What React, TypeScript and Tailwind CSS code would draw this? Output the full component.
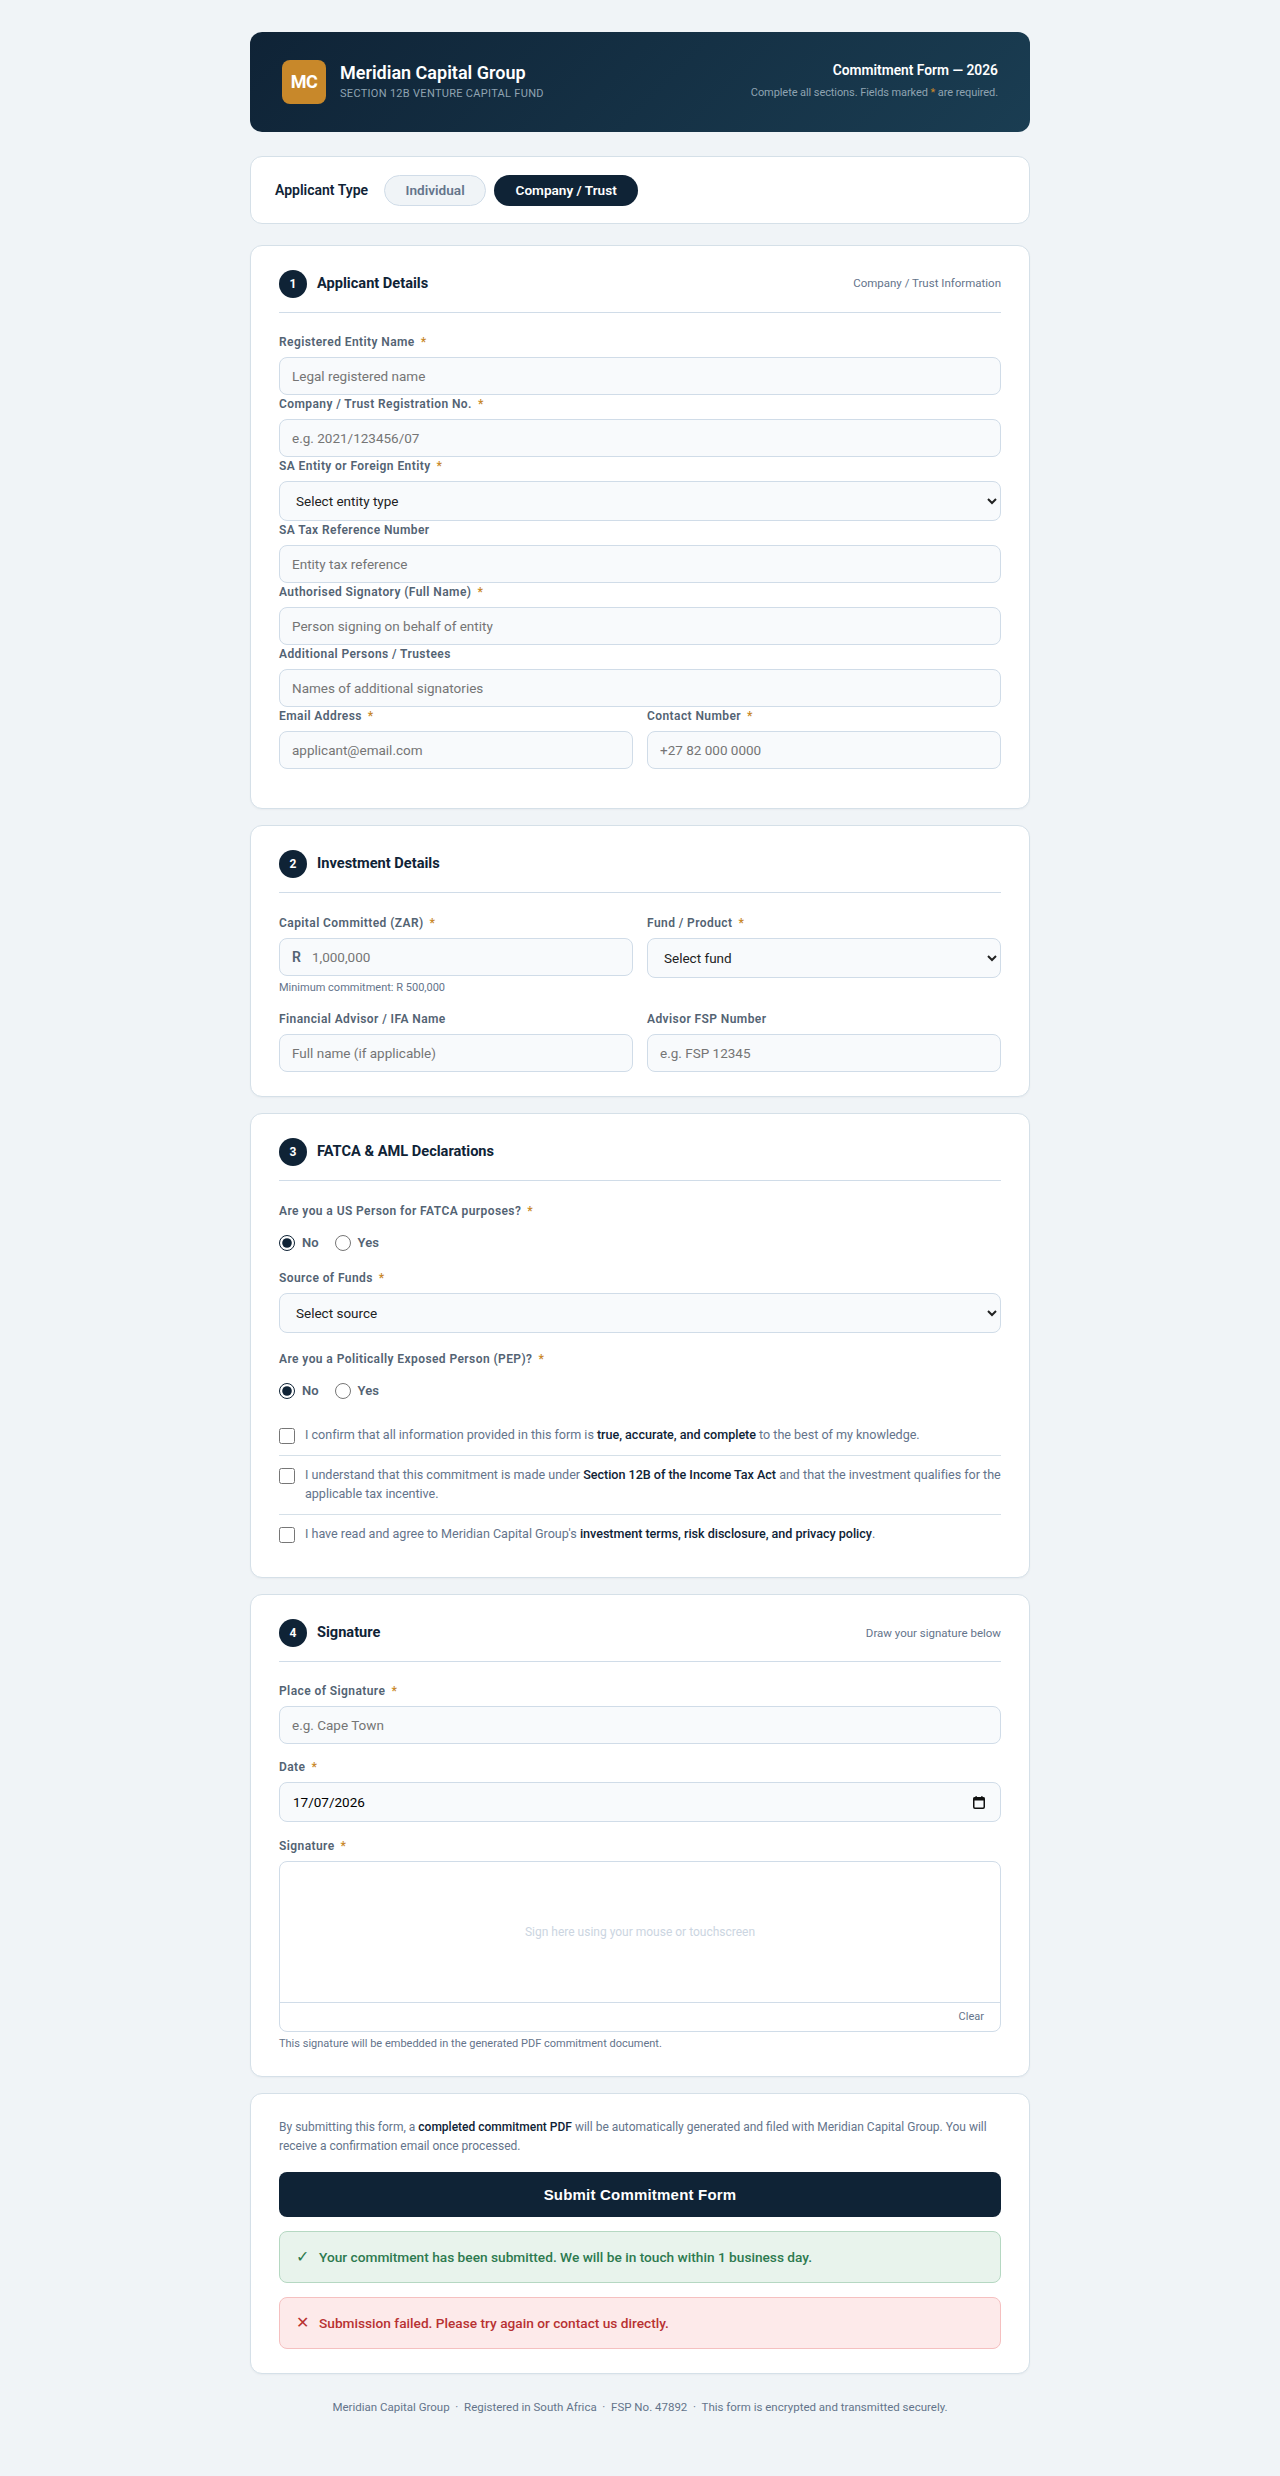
import React from "react";

const inputCls =
  "block w-full h-[38px] px-3 rounded-lg border border-[#d0dce8] bg-[#f8fafc] text-[13.5px] text-[#111827] placeholder:text-[#757575] outline-none";
const selectCls =
  "block w-full h-10 px-3 rounded-lg border border-[#d0dce8] bg-[#f8fafc] text-[13.5px] text-[#222] outline-none";

function Label({ text, req }: { text: string; req?: boolean }) {
  return (
    <label className="block h-[18px] mb-1.5 text-xs leading-[18px] font-semibold tracking-[0.42px] text-[#536373]">
      {text}
      {req && <span className="ml-1.5 text-[#c8882a]">*</span>}
    </label>
  );
}

function Field({ label, req, placeholder, className }: { label: string; req?: boolean; placeholder: string; className?: string }) {
  return (
    <div className={className}>
      <Label text={label} req={req} />
      <input className={inputCls} placeholder={placeholder} />
    </div>
  );
}

function SelectField({ label, req, option, className }: { label: string; req?: boolean; option: string; className?: string }) {
  return (
    <div className={className}>
      <Label text={label} req={req} />
      <select className={selectCls} defaultValue="">
        <option value="">{option}</option>
      </select>
    </div>
  );
}

function Heading({ n, title, note }: { n: number; title: string; note?: string }) {
  return (
    <div className="flex items-center justify-between pb-3.5 mb-5 border-b border-[#d0dce8]">
      <div className="flex items-center gap-2.5">
        <div className="w-7 h-7 rounded-full bg-[#0f2336] text-white flex items-center justify-center text-xs font-bold">{n}</div>
        <h2 className="text-[14.6px] font-bold text-[#0f2336]">{title}</h2>
      </div>
      {note && <span className="text-[11.5px] text-[#64748b]">{note}</span>}
    </div>
  );
}

function Card({ children, className }: { children: React.ReactNode; className?: string }) {
  return <section className={`bg-white border border-[#d5e0e8] rounded-xl px-7 py-6 shadow-[0_1px_2px_rgba(15,35,54,0.04)] ${className ?? ""}`}>{children}</section>;
}

function RadioRow({ name }: { name: string }) {
  return (
    <div className="flex items-center gap-4 h-6 mt-[11px] text-[13px] font-semibold text-[#536373]">
      <label className="flex items-center gap-[7px]">
        <input type="radio" name={name} defaultChecked className="w-4 h-4 accent-[#0f2336]" />
        No
      </label>
      <label className="flex items-center gap-[7px]">
        <input type="radio" name={name} className="w-4 h-4 accent-[#0f2336]" />
        Yes
      </label>
    </div>
  );
}

function Check({ children, last }: { children: React.ReactNode; last?: boolean }) {
  return (
    <label className={`flex items-start gap-2.5 py-2.5 text-[12.6px] leading-[18.85px] tracking-[-0.03px] text-[#64748b] ${last ? "" : "border-b border-[#d5e0e8]"}`}>
      <input type="checkbox" className="w-4 h-4 mt-0.5 shrink-0" />
      <span>{children}</span>
    </label>
  );
}

const B = ({ children }: { children: React.ReactNode }) => <strong className="font-medium text-[#0f2336]">{children}</strong>;

export default function App() {
  return (
    <div className="min-h-screen bg-[#f0f4f7] font-['Roboto',sans-serif] pt-8 pb-[60px]">
      <div className="w-[780px] mx-auto">
        <header className="h-[100px] rounded-xl px-8 flex items-center justify-between bg-[linear-gradient(135deg,#0f2336,#1a3d52)]">
          <div className="flex items-center gap-3.5">
            <div className="w-11 h-11 rounded-lg bg-[#c8882a] flex items-center justify-center text-white text-lg font-bold tracking-[-0.5px]">MC</div>
            <div>
              <div className="text-lg leading-[22px] font-semibold text-white">Meridian Capital Group</div>
              <div className="text-[11px] leading-4 mt-0.5 tracking-[0.3px] text-[#8fa3b1]">SECTION 12B VENTURE CAPITAL FUND</div>
            </div>
          </div>
          <div className="text-right pb-[2px]">
            <div className="text-[13.8px] leading-[18px] font-semibold text-white">Commitment Form — 2026</div>
            <div className="text-[11px] leading-4 mt-1.5 tracking-[-0.08px] text-[#8fa3b1]">
              Complete all sections. Fields marked <span className="text-[#c8882a]">*</span> are required.
            </div>
          </div>
        </header>

        <section className="mt-6 mb-[21px] h-[68px] bg-white border border-[#d5e0e8] rounded-xl px-6 flex items-center">
          <span className="text-sm font-semibold text-[#0f2336] mr-4">Applicant Type</span>
          <button className="w-[102px] h-[31px] rounded-full border border-[#d0dce8] bg-[#f0f4f7] text-[13.6px] font-semibold text-[#64748b] mr-2">Individual</button>
          <button className="w-[144px] h-[31px] rounded-full bg-[#0f2336] text-[13.6px] font-semibold text-white">Company / Trust</button>
        </section>

        <div className="flex flex-col gap-4">
          <Card>
            <Heading n={1} title="Applicant Details" note="Company / Trust Information" />
            <Field label="Registered Entity Name" req placeholder="Legal registered name" />
            <Field label="Company / Trust Registration No." req placeholder="e.g. 2021/123456/07" />
            <SelectField label="SA Entity or Foreign Entity" req option="Select entity type" />
            <Field label="SA Tax Reference Number" placeholder="Entity tax reference" />
            <Field label="Authorised Signatory (Full Name)" req placeholder="Person signing on behalf of entity" />
            <Field label="Additional Persons / Trustees" placeholder="Names of additional signatories" />
            <div className="grid grid-cols-2 gap-3.5 mb-[15px]">
              <Field label="Email Address" req placeholder="applicant@email.com" />
              <Field label="Contact Number" req placeholder="+27 82 000 0000" />
            </div>
          </Card>

          <Card>
            <Heading n={2} title="Investment Details" />
            <div className="grid grid-cols-2 gap-3.5 pt-px">
              <div>
                <Label text="Capital Committed (ZAR)" req />
                <div className="flex items-center h-[38px] px-3 rounded-lg border border-[#d0dce8] bg-[#f8fafc]">
                  <span className="text-sm font-semibold text-[#536373] mr-[11px]">R</span>
                  <input className="w-full bg-transparent text-[13.5px] placeholder:text-[#757575] outline-none" placeholder="1,000,000" />
                </div>
                <p className="mt-1 text-[11px] leading-[16px] text-[#64748b]">Minimum commitment: R 500,000</p>
              </div>
              <SelectField label="Fund / Product" req option="Select fund" />
            </div>
            <div className="grid grid-cols-2 gap-3.5 mt-3.5">
              <Field label="Financial Advisor / IFA Name" placeholder="Full name (if applicable)" />
              <Field label="Advisor FSP Number" placeholder="e.g. FSP 12345" />
            </div>
          </Card>

          <Card>
            <Heading n={3} title="FATCA & AML Declarations" />
            <div className="pt-px">
              <Label text="Are you a US Person for FATCA purposes?" req />
              <RadioRow name="us" />
            </div>
            <SelectField className="mt-3.5" label="Source of Funds" req option="Select source" />
            <div className="mt-[17px]">
              <Label text="Are you a Politically Exposed Person (PEP)?" req />
              <RadioRow name="pep" />
            </div>
            <div className="mt-[13px]">
              <Check>
                I confirm that all information provided in this form is <B>true, accurate, and complete</B> to the best of my knowledge.
              </Check>
              <Check>
                I understand that this commitment is made under <B>Section 12B of the Income Tax Act</B> and that the investment qualifies for the applicable tax incentive.
              </Check>
              <Check last>
                I have read and agree to Meridian Capital Group's <B>investment terms, risk disclosure, and privacy policy</B>.
              </Check>
            </div>
          </Card>

          <Card>
            <Heading n={4} title="Signature" note="Draw your signature below" />
            <Field label="Place of Signature" req placeholder="e.g. Cape Town" className="mb-3.5" />
            <div className="mb-[15px]">
              <Label text="Date" req />
              <div className="relative">
                <input type="text" defaultValue="17/07/2026" className="block w-full h-10 pl-[13px] pr-3 rounded-lg border border-[#d0dce8] bg-[#f8fafc] text-[13.5px] text-black outline-none" />
                <svg className="absolute right-[16px] top-[14px] w-[12px] h-[13px]" viewBox="0 0 12 13" fill="none">
                  <rect x="0.75" y="1.75" width="10.5" height="10.5" rx="1.2" stroke="#111" strokeWidth="1.5" />
                  <rect x="0.5" y="1.5" width="11" height="3" fill="#111" />
                  <rect x="2.5" y="0" width="1.2" height="2" fill="#111" />
                  <rect x="8.3" y="0" width="1.2" height="2" fill="#111" />
                </svg>
              </div>
            </div>
            <Label text="Signature" req />
            <div className="rounded-lg border border-[#d0dce8] overflow-hidden">
              <div className="h-[140px] flex items-center justify-center text-xs text-[#cbd5e1]">Sign here using your mouse or touchscreen</div>
              <div className="h-[29px] border-t border-[#d0dce8] flex items-center justify-end px-4 text-[11px] text-[#64748b]">Clear</div>
            </div>
            <p className="mt-1 text-[11px] leading-4 text-[#64748b]">This signature will be embedded in the generated PDF commitment document.</p>
          </Card>

          <Card>
            <p className="text-xs leading-[19px] text-[#64748b]">
              By submitting this form, a <B>completed commitment PDF</B> will be automatically generated and filed with Meridian Capital Group. You will receive a confirmation email once processed.
            </p>
            <button className="block w-full h-[45px] mt-4 rounded-lg bg-[#0f2336] text-white text-[15px] font-bold font-['Liberation_Sans',sans-serif] tracking-[0.2px]">Submit Commitment Form</button>
            <div className="flex items-center gap-2.5 h-[52px] mt-3.5 px-4 rounded-lg border border-[#b5d8c2] bg-[#e8f3ec] text-[13.7px] font-medium text-[#2d7a4f]">
              <span className="text-base">✓</span>
              Your commitment has been submitted. We will be in touch within 1 business day.
            </div>
            <div className="flex items-center gap-2.5 h-[52px] mt-3.5 px-4 rounded-lg border border-[#f5c0c0] bg-[#fdeaea] text-[13.7px] font-medium text-[#b83232]">
              <span className="text-base">✕</span>
              Submission failed. Please try again or contact us directly.
            </div>
          </Card>
        </div>

        <footer className="mt-[25px] text-center text-[11.5px] leading-4 text-[#64748b]">
          Meridian Capital Group &nbsp;·&nbsp; Registered in South Africa &nbsp;·&nbsp; FSP No. 47892 &nbsp;·&nbsp; This form is encrypted and transmitted securely.
        </footer>
      </div>
    </div>
  );
}
